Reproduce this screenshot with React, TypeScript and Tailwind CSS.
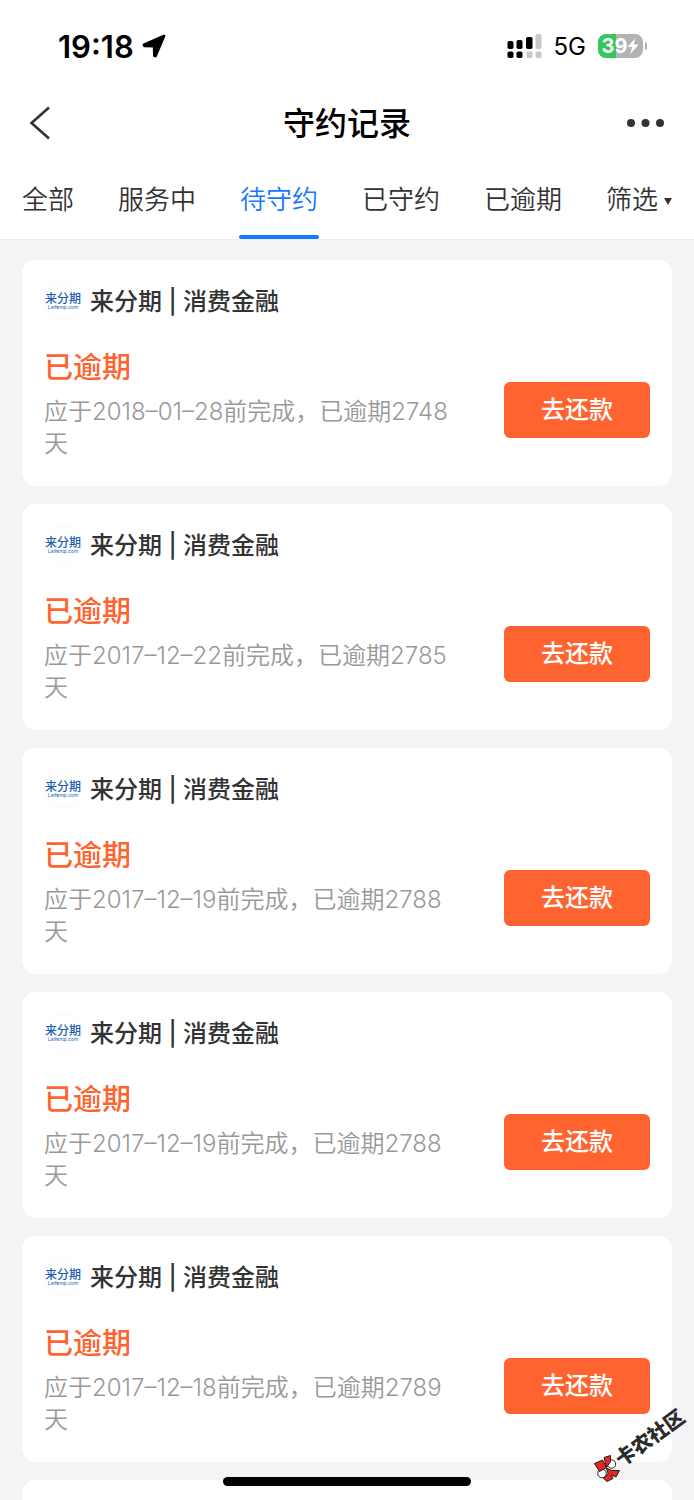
import React from "react";

type RecordItem = { id: number; date: string; days: number };

const records: RecordItem[] = [
  { id: 1, date: "2018–01–28", days: 2748 },
  { id: 2, date: "2017–12–22", days: 2785 },
  { id: 3, date: "2017–12–19", days: 2788 },
  { id: 4, date: "2017–12–19", days: 2788 },
  { id: 5, date: "2017–12–18", days: 2789 },
];

const tabs = ["全部", "服务中", "待守约", "已守约", "已逾期"];

function StatusBar() {
  return (
    <div className="flex h-[92px] items-center justify-between pr-[47px] pl-[58px]">
      <div className="flex items-center gap-2">
        <span className="pt-0.5 text-[31px] leading-9 font-semibold text-black">19:18</span>
        <svg className="h-6 w-6" viewBox="0 0 24 24" aria-hidden="true">
          <path
            d="M22 2 2 10.800 2.500 11.800 12.200 12 12.400 21.600 13.500 22Z"
            fill="#000"
            stroke="#000"
            strokeWidth="2.800"
            strokeLinejoin="round"
          />
        </svg>
      </div>
      <div className="flex items-center">
        <svg className="h-6 w-[35px]" viewBox="0 0 35 24" aria-hidden="true">
          <rect x="0.500" y="7" width="6" height="8" rx="1.800" />
          <rect x="9.500" y="6" width="6" height="9" rx="1.800" />
          <rect x="19" y="3" width="6.500" height="12" rx="1.800" />
          <rect x="28.500" y="0" width="6" height="15" rx="1.800" fill="#c8c8c8" />
          <rect x="0.500" y="17.500" width="6" height="6.500" rx="1.800" />
          <rect x="9.500" y="17.500" width="6" height="6.500" rx="1.800" />
          <rect x="19.500" y="17.500" width="6" height="6.500" rx="1.800" fill="#c8c8c8" />
          <rect x="28.500" y="17.500" width="6" height="6.500" rx="1.800" fill="#c8c8c8" />
        </svg>
        <span className="ml-3 pt-0.5 text-2xl text-black">5G</span>
        <div className="ml-3 flex h-6 w-[45px] items-center justify-center rounded-lg bg-linear-to-r from-[#34c759] from-40% to-[#b3b3b3] to-40%">
          <span className="text-xl leading-6 font-bold text-white">39</span>
          <svg className="h-4 w-3" viewBox="0 0 12 16" aria-hidden="true">
            <path d="M8.500 0 .5 9h4.700L3.200 16 11.700 6.600H6.800Z" fill="#fff" />
          </svg>
        </div>
        <span className="ml-0.5 h-2 w-0.5 rounded-r-full bg-[#b3b3b3]" />
      </div>
    </div>
  );
}

function NavBar() {
  return (
    <div className="flex h-[62px] items-center justify-between px-[29px]">
      <button type="button" aria-label="返回" className="flex w-10 items-center">
        <svg className="h-[34px] w-[22px]" viewBox="0 0 22 34" fill="none" aria-hidden="true">
          <path d="M20 1.500 2.500 17 20 32.500" stroke="#333" strokeWidth="2.600" />
        </svg>
      </button>
      <h1 className="pt-0.5 text-[32px] leading-10 font-medium text-black">守约记录</h1>
      <button type="button" aria-label="更多" className="flex w-10 items-center justify-end">
        <svg className="h-2 w-[38px]" viewBox="0 0 38 8" fill="#333" aria-hidden="true">
          <circle cx="4" cy="4" r="4" />
          <circle cx="18.500" cy="4" r="4" />
          <circle cx="33" cy="4" r="4" />
        </svg>
      </button>
    </div>
  );
}

function TabBar() {
  return (
    <nav className="flex h-[86px] justify-between border-b border-[#ebebeb] px-[21px] text-[26px] font-[350]">
      {tabs.map((tab) =>
        tab === "待守约" ? (
          <button
            key={tab}
            type="button"
            aria-current="page"
            className="flex flex-col justify-between pt-[26px] leading-10 text-[#1677ff]"
          >
            <span className="px-px">{tab}</span>
            <span className="h-1 w-full rounded-full bg-[#1677ff]" />
          </button>
        ) : (
          <button key={tab} type="button" className="flex px-px pt-[26px] leading-10 text-[#333]">
            {tab}
          </button>
        ),
      )}
      <button type="button" className="flex gap-1.5 px-px pt-[26px] leading-10 text-[#333]">
        筛选
        <svg className="mt-[18px] h-[7px] w-2" viewBox="0 0 8 7" aria-hidden="true">
          <path d="M0 0h8L4 7Z" fill="#333" />
        </svg>
      </button>
    </nav>
  );
}

function BrandLogo() {
  return (
    <span className="flex h-[38px] w-[38px] flex-col items-center justify-center rounded-full border border-[#f8fafa] text-[#1b5fb4]">
      <span className="text-[12px] leading-3 font-medium whitespace-nowrap">来分期</span>
      <span className="text-[5px] leading-[5px] whitespace-nowrap">Laifenqi.com</span>
    </span>
  );
}

function RecordCard({ record }: { record: RecordItem }) {
  return (
    <article className="h-[226px] shrink-0 rounded-[14px] bg-white px-[22px] pt-[22px]">
      <div className="flex items-center gap-2">
        <BrandLogo />
        <h2 className="pt-0.5 text-2xl font-medium text-[#333]">来分期 | 消费金融</h2>
      </div>
      <div className="mt-7 flex items-end justify-between">
        <div className="w-[414px]">
          <p className="text-[29px] leading-10 font-medium text-[#ff6430]">已逾期</p>
          <p className="mt-2 text-2xl font-[350] text-[#999]">
            应于{record.date}前完成，已逾期{record.days}天
          </p>
        </div>
        <button
          type="button"
          className="mb-[22px] h-14 w-[146px] rounded-md bg-[#ff6430] text-2xl font-medium text-white"
        >
          去还款
        </button>
      </div>
    </article>
  );
}

function CommunityBadge() {
  return (
    <div className="absolute right-2.5 bottom-[18px] flex h-[74px] w-[90px]">
      <svg className="h-[27px] w-[26px] shrink-0 self-end" viewBox="-0.500 -0.500 26 27" aria-hidden="true">
        <g stroke="#111" strokeWidth="0.900" strokeLinejoin="round">
          <circle cx="17" cy="8.500" r="4.200" fill="#fff" />
          <circle cx="7.500" cy="18" r="4.300" fill="#fff" />
          <path d="M0 8 8 4.500 12 12 5 16Z" fill="#e02a20" />
          <path d="M9.500 2 16 0 16 6 12 12Z" fill="#e02a20" />
          <path d="M12 12.500 17 15 25 15 21.500 21.500 16.500 19.500 18.500 23 12.500 26 9 23 13.500 18Z" fill="#e02a20" />
        </g>
      </svg>
      <span className="mt-4 -ml-2.5 h-7 w-20 shrink-0 -rotate-[36deg] text-xl leading-7 font-black whitespace-nowrap text-[#2b2b2b]">
        卡农社区
      </span>
    </div>
  );
}

export default function App() {
  return (
    <div className="relative flex h-screen flex-col overflow-hidden bg-[#f4f4f4] font-['Inter','Noto_Sans_CJK_SC',sans-serif]">
      <header className="shrink-0 bg-white">
        <StatusBar />
        <NavBar />
        <TabBar />
      </header>
      <main className="flex min-h-0 flex-1 flex-col gap-[18px] overflow-y-auto px-[22px] pt-5 [scrollbar-width:none]">
        {records.map((record) => (
          <RecordCard key={record.id} record={record} />
        ))}
        <div className="h-[226px] shrink-0 rounded-[14px] bg-white" />
      </main>
      <CommunityBadge />
      <div className="absolute bottom-3.5 left-1/2 h-[9px] w-[248px] -translate-x-1/2 rounded-full bg-black" />
    </div>
  );
}
